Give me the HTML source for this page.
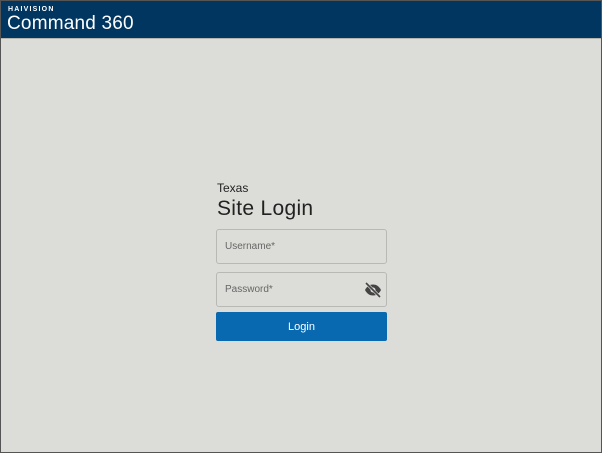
<!DOCTYPE html>
<html><head><style>
html,body{margin:0;padding:0}
body{width:602px;height:453px;background:#dcdcd8;position:relative;overflow:hidden;font-family:"Liberation Sans",sans-serif;box-sizing:border-box;border:1px solid #555}
.hdr{position:absolute;left:0;top:0;width:600px;height:37px;background:#003660;border-bottom:1px solid #b5b5b0}
.hv{position:absolute;left:7px;top:5px;font-size:7px;font-weight:bold;letter-spacing:1.2px;color:#fff}
.cmd{position:absolute;left:6px;top:12px;font-size:19px;color:#fff;letter-spacing:0.2px}
.t1{position:absolute;left:216px;top:180px;font-size:12px;color:#222}
.t2{position:absolute;left:216px;top:196px;font-size:21px;color:#222;letter-spacing:0.3px}
.f{position:absolute;left:215px;width:169px;height:33px;border:1px solid #b8b8b4;border-radius:3px;box-sizing:content-box}
.f span{position:absolute;left:8px;top:11px;font-size:10px;color:#666}
.btn{position:absolute;left:215px;top:311px;width:171px;height:29px;background:#0868b0;border-radius:2px;color:#fff;font-size:11px;text-align:center;line-height:30px}
</style></head><body>
<div class="hdr"><div class="hv">HAIVISION</div><div class="cmd">Command 360</div></div>
<div class="t1">Texas</div>
<div class="t2">Site Login</div>
<div class="f" style="top:228px"><span>Username*</span></div>
<div class="f" style="top:271px"><span>Password*</span>
<svg style="position:absolute;left:147px;top:9px" width="18" height="16" viewBox="0 0 18 16"><path d="M1 8C3 4 6 2.5 9 2.5S15 4 17 8C15 12 12 13.5 9 13.5S3 12 1 8Z" fill="#444"/><circle cx="9" cy="8" r="2.5" fill="#dcdcd8"/><path d="M2 1L16 15" stroke="#dcdcd8" stroke-width="3"/><path d="M2 1L16 15" stroke="#444" stroke-width="1.6"/></svg></div>
<div class="btn">Login</div>
</body></html>
